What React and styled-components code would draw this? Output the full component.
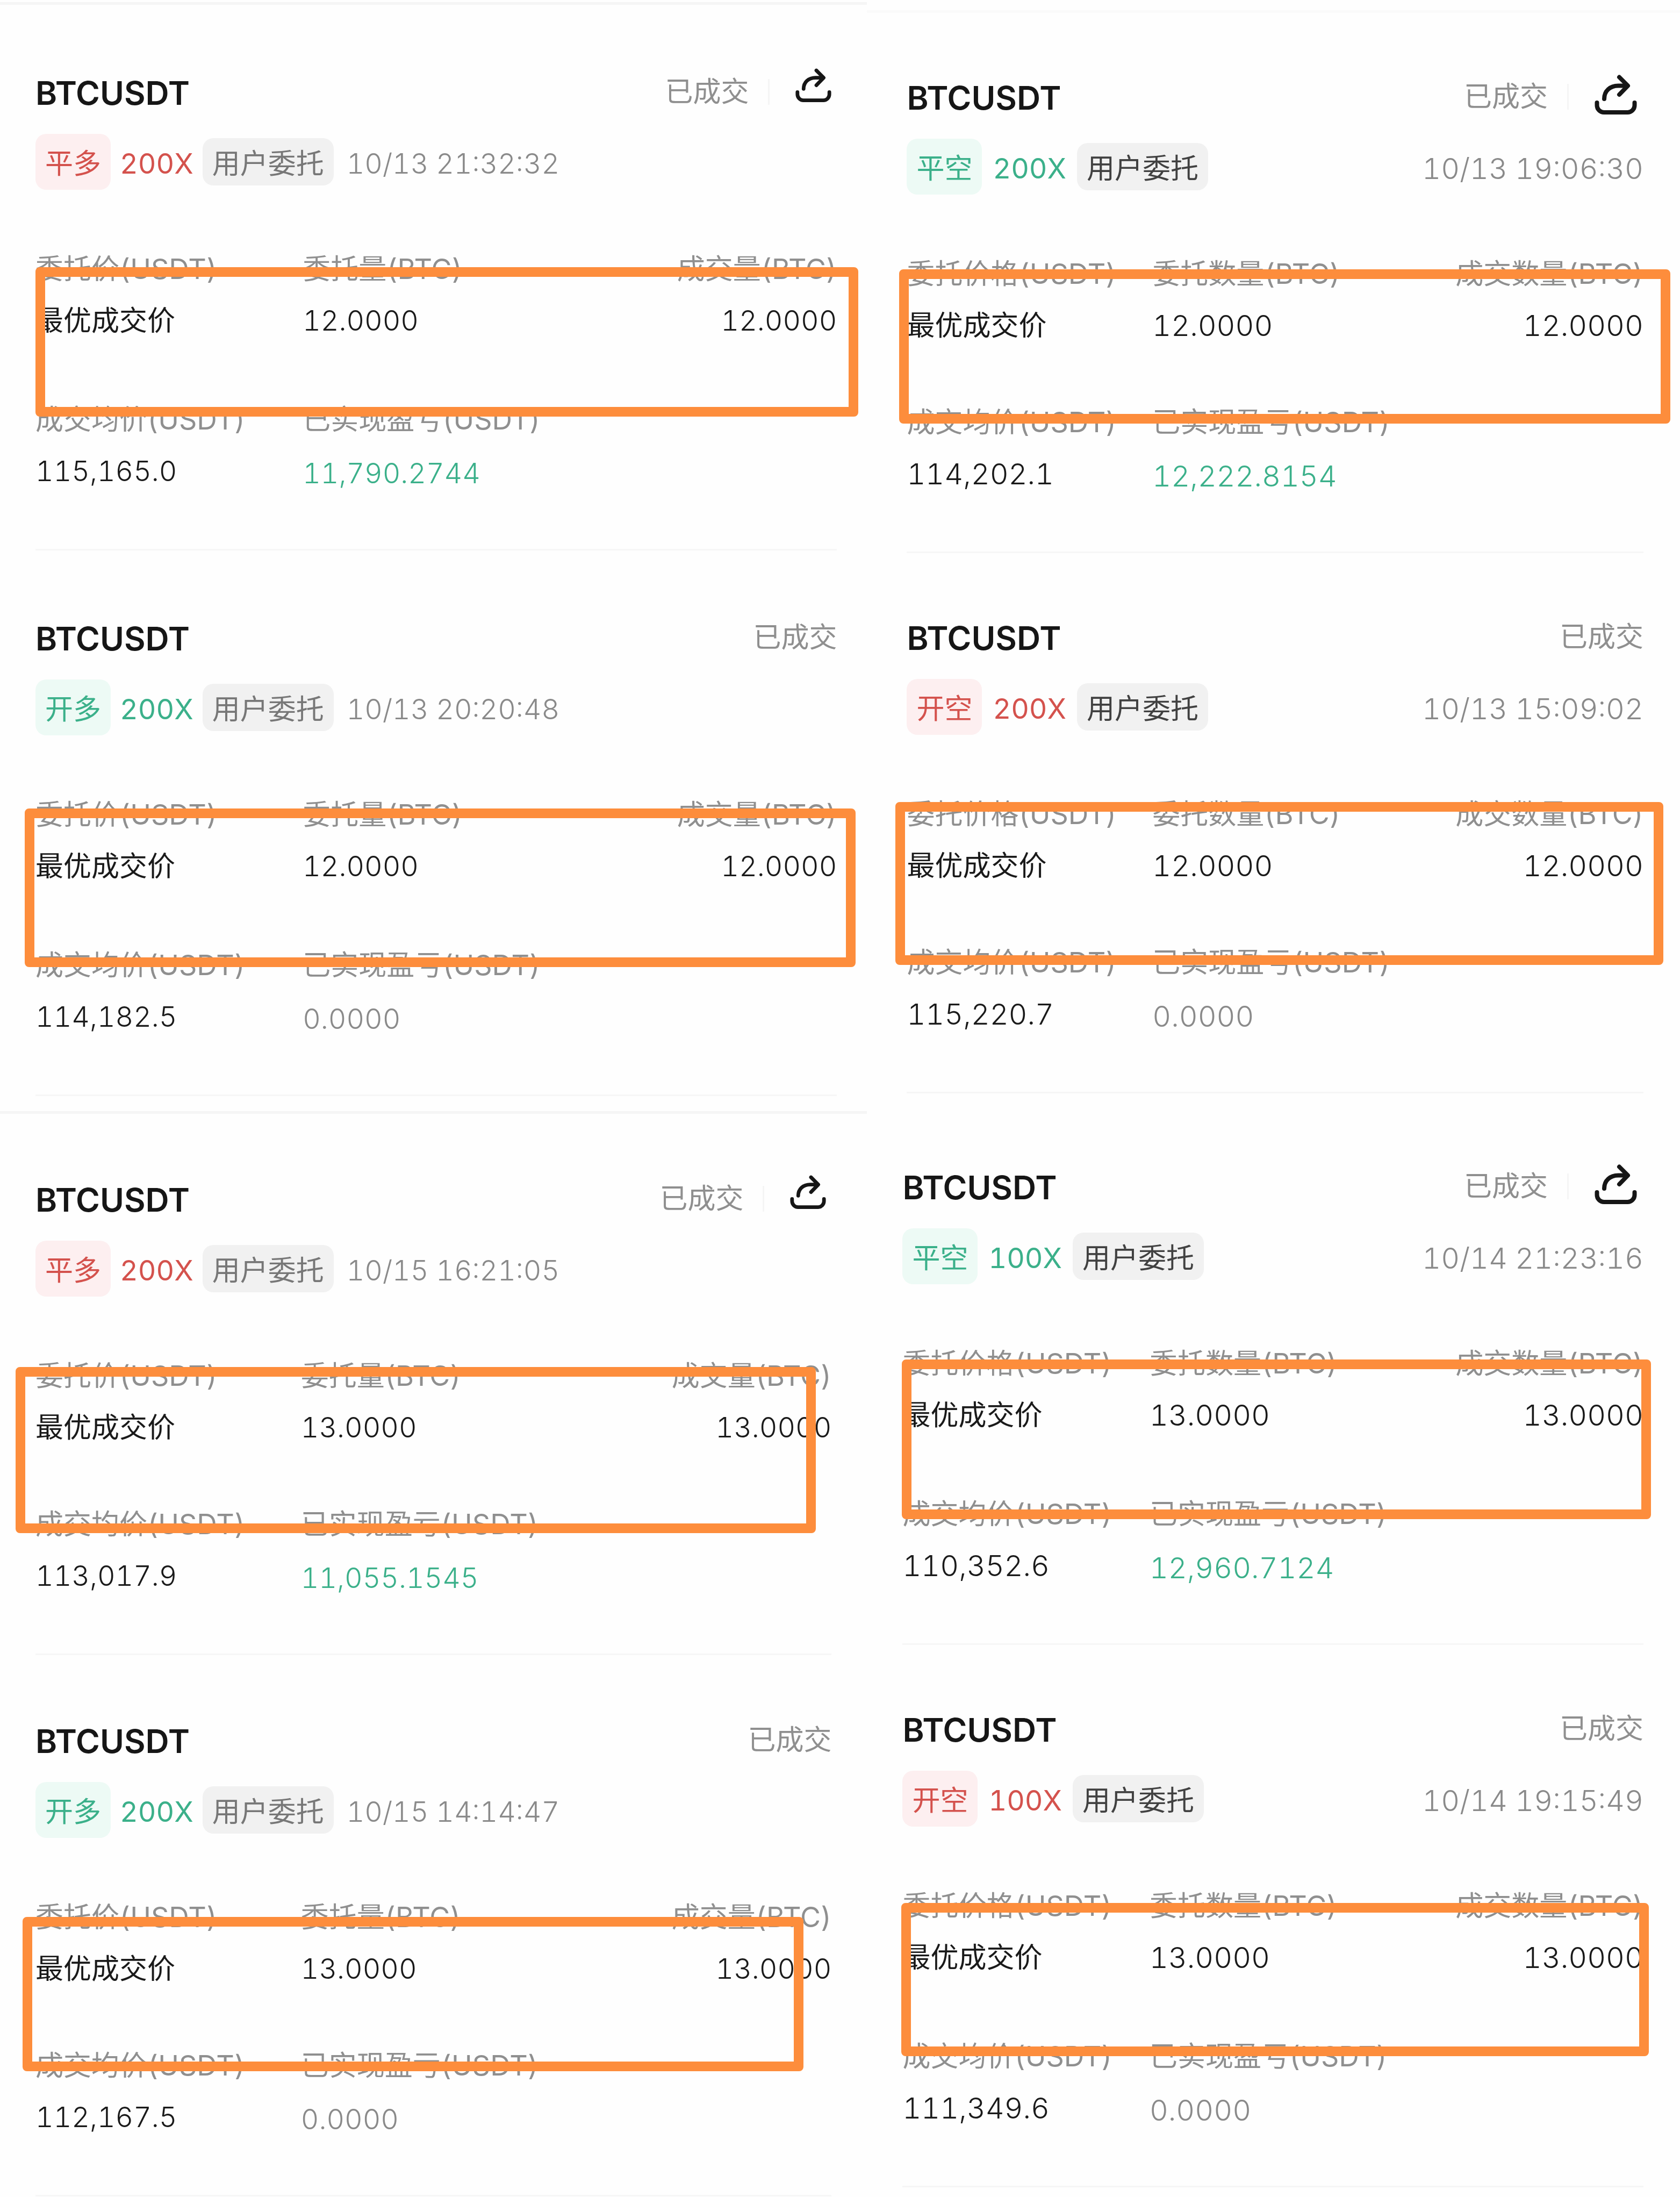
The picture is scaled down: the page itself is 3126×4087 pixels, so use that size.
import React from 'react';
import styled, { createGlobalStyle } from 'styled-components';

const shortLabels = ['委托价(USDT)', '委托量(BTC)', '成交量(BTC)'];
const longLabels = ['委托价格(USDT)', '委托数量(BTC)', '成交数量(BTC)'];

const columns = [
  [
    {
      id: 'close-long-12',
      labels: shortLabels,
      layout: { start: 4, top: 124, left: 66, right: 56, fieldGap: 112, line: '#f5f5f5' },
      orders: [
        {
          side: '平多',
          tone: 'red',
          lever: '200X',
          time: '10/13 21:32:32',
          amount: '12.0000',
          price: '115,165.0',
          profit: '11,790.2744',
          share: true,
          mark: { top: 32, left: 0, right: -40, height: 278 },
        },
        {
          side: '开多',
          tone: 'green',
          lever: '200X',
          time: '10/13 20:20:48',
          amount: '12.0000',
          price: '114,182.5',
          profit: '0.0000',
          mark: { top: 24, left: -20, right: -35, height: 295 },
        },
      ],
    },
    {
      id: 'close-long-13',
      labels: shortLabels,
      layout: { start: 28, top: 120, left: 66, right: 66, fieldGap: 108, line: '#f5f5f5' },
      orders: [
        {
          side: '平多',
          tone: 'red',
          lever: '200X',
          time: '10/15 16:21:05',
          amount: '13.0000',
          price: '113,017.9',
          profit: '11,055.1545',
          share: true,
          mark: { top: 19, left: -37, right: 29, height: 309 },
        },
        {
          side: '开多',
          tone: 'green',
          lever: '200X',
          time: '10/15 14:14:47',
          amount: '13.0000',
          price: '112,167.5',
          profit: '0.0000',
          mark: { top: 35, left: -24, right: 52, height: 287 },
        },
      ],
    },
  ],
  [
    {
      id: 'close-short-12',
      labels: longLabels,
      wide: true,
      layout: { start: 19, top: 118, left: 74, right: 68, fieldGap: 108, line: '#fafafa' },
      orders: [
        {
          side: '平空',
          tone: 'green',
          lever: '200X',
          time: '10/13 19:06:30',
          amount: '12.0000',
          price: '114,202.1',
          profit: '12,222.8154',
          share: true,
          mark: { top: 27, left: -14, right: -50, height: 287 },
        },
        {
          side: '开空',
          tone: 'red',
          lever: '200X',
          time: '10/13 15:09:02',
          amount: '12.0000',
          price: '115,220.7',
          profit: '0.0000',
          mark: { top: 13, left: -21, right: -37, height: 303 },
        },
      ],
    },
    {
      id: 'close-short-13',
      labels: longLabels,
      wide: true,
      layout: { start: 12, top: 118, left: 66, right: 68, fieldGap: 112, line: 'transparent' },
      orders: [
        {
          side: '平空',
          tone: 'green',
          lever: '100X',
          time: '10/14 21:23:16',
          amount: '13.0000',
          price: '110,352.6',
          profit: '12,960.7124',
          share: true,
          mark: { top: 28, left: -1, right: -14, height: 297 },
        },
        {
          side: '开空',
          tone: 'red',
          lever: '100X',
          time: '10/14 19:15:49',
          amount: '13.0000',
          price: '111,349.6',
          profit: '0.0000',
          mark: { top: 30, left: -2, right: -10, height: 285 },
        },
      ],
    },
  ],
];

const ShareIcon = () => (
  <svg
    xmlns="http://www.w3.org/2000/svg"
    fill="none"
    viewBox="0 0 79 75"
    strokeWidth="8"
    stroke="currentColor"
    strokeLinecap="round"
    strokeLinejoin="round"
  >
    <path d="M4.5 52v5a13 13 0 0 0 13 13h44a13 13 0 0 0 13-13v-5" />
    <path d="M18 45C18 30 29 20.500 44 20.500H61" />
    <path d="M46 4.500L62 20.500L46 37" />
  </svg>
);

const Order = ({ order, labels, layout, wide }) => (
  <Card $top={layout.top}>
    <Header>
      <Pair>BTCUSDT</Pair>
      <Status>
        <span>已成交</span>
        {order.share && (
          <>
            <Separator />
            <ShareButton type="button" aria-label="分享" $wide={wide}>
              <ShareIcon />
            </ShareButton>
          </>
        )}
      </Status>
    </Header>
    <Tags>
      <Side $tone={order.tone}>{order.side}</Side>
      <Lever $tone={order.tone} $wide={wide}>
        {order.lever}
      </Lever>
      <Source $wide={wide}>用户委托</Source>
      <Time $wide={wide}>{order.time}</Time>
    </Tags>
    <Fields $gap={layout.fieldGap}>
      <Field>
        <Label>{labels[0]}</Label>
        <Value>最优成交价</Value>
      </Field>
      <Field>
        <Label>{labels[1]}</Label>
        <Amount $wide={wide}>{order.amount}</Amount>
      </Field>
      <Field $end>
        <Label>{labels[2]}</Label>
        <Amount $wide={wide}>{order.amount}</Amount>
      </Field>
      <Field>
        <Label>成交均价(USDT)</Label>
        <Amount $wide={wide}>{order.price}</Amount>
      </Field>
      <Field>
        <Label>已实现盈亏(USDT)</Label>
        <Profit $wide={wide} $zero={order.profit === '0.0000'}>
          {order.profit}
        </Profit>
      </Field>
      <Mark $box={order.mark} />
    </Fields>
  </Card>
);

const App = () => {
  return (
    <>
      <GlobalStyle />
      <Page>
        {columns.map((panels, i) => (
          <Column key={i}>
            {panels.map((panel) => (
              <Panel key={panel.id} $layout={panel.layout}>
                {panel.orders.map((order) => (
                  <Order
                    key={order.time}
                    order={order}
                    labels={panel.labels}
                    layout={panel.layout}
                    wide={panel.wide}
                  />
                ))}
              </Panel>
            ))}
          </Column>
        ))}
      </Page>
    </>
  );
};

const GlobalStyle = createGlobalStyle`
  * {
    box-sizing: border-box;
  }
  body {
    margin: 0;
    background-color: #fefefe;
    font-family: Inter, 'Noto Sans CJK SC', sans-serif;
    font-variant-numeric: tabular-nums;
  }
`;

const tones = {
  red: { color: '#d4524d', background: '#fdeff0' },
  green: { color: '#3bb08a', background: '#edfaf5' },
};

const Page = styled.main`
  display: grid;
  grid-template-columns: 16fr 15fr;
  min-height: 100vh;
`;

const Column = styled.div`
  display: flex;
  flex-direction: column;
  min-width: 0;
`;

const Panel = styled.section`
  margin-top: ${({ $layout }) => $layout.start}px;
  padding: 0 ${({ $layout }) => $layout.right}px 0 ${({ $layout }) => $layout.left}px;
  border-top: 5px solid ${({ $layout }) => $layout.line};
`;

const Card = styled.article`
  padding-top: ${({ $top }) => $top}px;
  padding-bottom: 108px;
  border-bottom: 3px solid #f6f6f6;
`;

const Header = styled.header`
  display: flex;
  justify-content: space-between;
  align-items: center;
  height: 80px;
`;

const Pair = styled.h2`
  margin: 0;
  font-size: 61px;
  font-weight: 600;
  line-height: 80px;
  color: #161616;
`;

const Status = styled.div`
  display: flex;
  align-items: center;
  margin-bottom: 4px;
  font-size: 52px;
  line-height: 72px;
  color: #8f8f8f;
`;

const Separator = styled.span`
  width: 3px;
  height: 48px;
  margin: 0 48px 0 36px;
  background-color: #f5f5f5;
`;

const ShareButton = styled.button`
  display: flex;
  padding: 0;
  margin-right: ${({ $wide }) => ($wide ? 12 : 10)}px;
  margin-bottom: ${({ $wide }) => ($wide ? 8 : 24)}px;
  border: none;
  background: none;
  color: #161616;
  cursor: pointer;
  > svg {
    width: ${({ $wide }) => ($wide ? 79 : 67)}px;
    height: ${({ $wide }) => ($wide ? 75 : 64)}px;
  }
`;

const Tags = styled.div`
  display: flex;
  align-items: center;
  height: 104px;
  margin-top: 36px;
  font-size: 52px;
  line-height: 72px;
`;

const Side = styled.span`
  padding: 20px 18px 12px;
  border-radius: 20px;
  color: ${({ $tone }) => tones[$tone].color};
  background-color: ${({ $tone }) => tones[$tone].background};
`;

const Lever = styled.span`
  margin: 8px ${({ $wide }) => ($wide ? 20 : 17)}px 0;
  color: ${({ $tone }) => tones[$tone].color};
`;

const Source = styled.span`
  padding: 12px 18px 4px;
  border-radius: 20px;
  color: ${({ $wide }) => ($wide ? '#414141' : '#777777')};
  background-color: #f1f1f1;
`;

const Time = styled.time`
  margin-top: 8px;
  margin-left: ${({ $wide }) => ($wide ? 'auto' : '24px')};
  font-size: ${({ $wide }) => ($wide ? 54 : 52)}px;
  font-weight: 300;
  color: #8a8a8a;
`;

const Fields = styled.dl`
  position: relative;
  display: grid;
  grid-template-columns: repeat(3, 1fr);
  row-gap: ${({ $gap }) => $gap}px;
  margin: 112px 0 0;
`;

const Field = styled.div`
  display: flex;
  flex-direction: column;
  gap: 24px;
  text-align: ${({ $end }) => ($end ? 'right' : 'left')};
`;

const Label = styled.dt`
  font-size: 52px;
  line-height: 72px;
  white-space: nowrap;
  color: #8f8f8f;
`;

const Value = styled.dd`
  margin: 0;
  font-size: 52px;
  line-height: 72px;
  white-space: nowrap;
  color: #1a1a1a;
`;

const Amount = styled(Value)`
  font-size: ${({ $wide }) => ($wide ? 54 : 52)}px;
  font-weight: 300;
`;

const Profit = styled(Amount)`
  padding-top: 4px;
  margin-bottom: -4px;
  color: ${({ $zero }) => ($zero ? '#8a8a8a' : '#3bb08a')};
`;

// highlight frame drawn over the order row
const Mark = styled.div`
  position: absolute;
  top: ${({ $box }) => $box.top}px;
  left: ${({ $box }) => $box.left}px;
  right: ${({ $box }) => $box.right}px;
  height: ${({ $box }) => $box.height}px;
  border: 18px solid #fd8d3c;
  border-radius: 8px;
  pointer-events: none;
`;

export default App;
